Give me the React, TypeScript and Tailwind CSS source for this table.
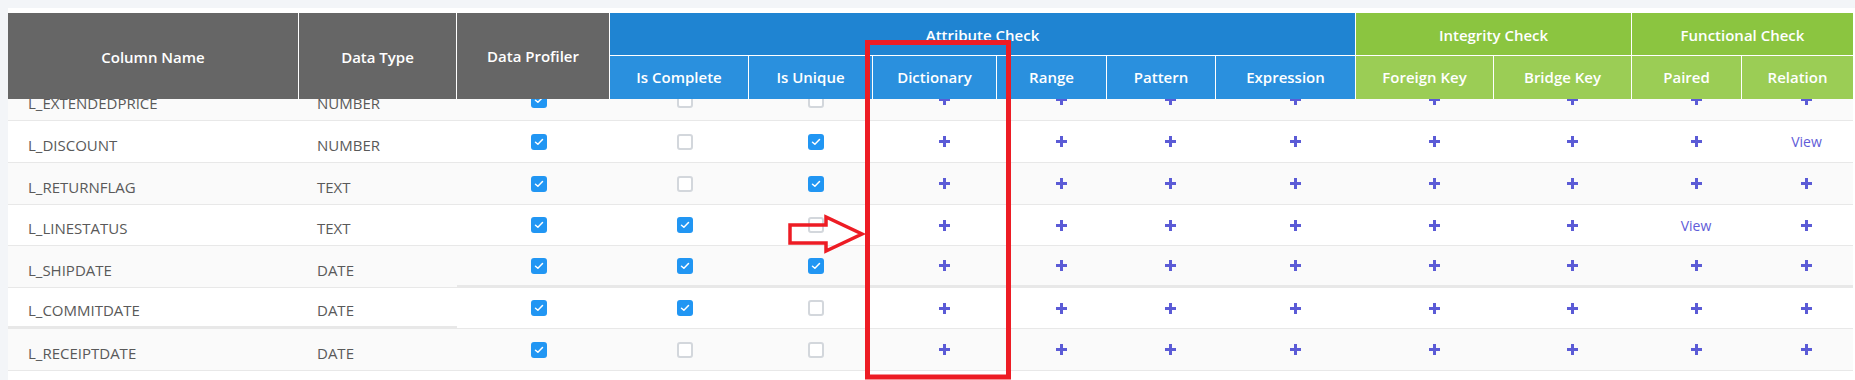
import React from 'react';

type Cell = 'plus' | 'view';

interface Row {
  name: string;
  type: string;
  profiler: boolean;
  complete: boolean;
  unique: boolean;
  checks: Cell[];
  height: string;
  leftBorder: string;
  rightBorder: string;
}

const COLS = 'grid grid-cols-[291px_158px_153px_139px_124px_124px_110px_109px_140px_138px_138px_110px_111px]';

const plusAll = (): Cell[] => ['plus', 'plus', 'plus', 'plus', 'plus', 'plus', 'plus', 'plus'];

const rows: Row[] = [
  { name: 'L_EXTENDEDPRICE', type: 'NUMBER', profiler: true, complete: false, unique: false, checks: plusAll(), height: 'h-[42px]', leftBorder: 'border-b', rightBorder: 'border-b' },
  { name: 'L_DISCOUNT', type: 'NUMBER', profiler: true, complete: false, unique: true, checks: ['plus', 'plus', 'plus', 'plus', 'plus', 'plus', 'plus', 'view'], height: 'h-[42px]', leftBorder: 'border-b', rightBorder: 'border-b' },
  { name: 'L_RETURNFLAG', type: 'TEXT', profiler: true, complete: false, unique: true, checks: plusAll(), height: 'h-[42px]', leftBorder: 'border-b', rightBorder: 'border-b' },
  { name: 'L_LINESTATUS', type: 'TEXT', profiler: true, complete: true, unique: false, checks: ['plus', 'plus', 'plus', 'plus', 'plus', 'plus', 'view', 'plus'], height: 'h-[41px]', leftBorder: 'border-b', rightBorder: 'border-b' },
  { name: 'L_SHIPDATE', type: 'DATE', profiler: true, complete: true, unique: true, checks: plusAll(), height: 'h-[42px]', leftBorder: 'border-b', rightBorder: 'border-b-[3px]' },
  { name: 'L_COMMITDATE', type: 'DATE', profiler: true, complete: true, unique: false, checks: plusAll(), height: 'h-[41px]', leftBorder: 'border-b-[3px]', rightBorder: 'border-b' },
  { name: 'L_RECEIPTDATE', type: 'DATE', profiler: true, complete: false, unique: false, checks: plusAll(), height: 'h-[42px]', leftBorder: 'border-b', rightBorder: 'border-b' },
];

const Checkbox: React.FC<{ checked: boolean }> = ({ checked }) =>
  checked ? (
    <span className="w-4 h-4 rounded-[3px] bg-[#2196f3] flex items-center justify-center">
      <svg width="10" height="8" viewBox="0 0 10 8" fill="none">
        <path d="M1.5 4.2 L3.9 6.3 L8.5 1.6" stroke="white" strokeWidth="1.5" strokeLinecap="round" strokeLinejoin="round" />
      </svg>
    </span>
  ) : (
    <span className="w-4 h-4 rounded-[3px] bg-white border-2 border-[#d3d7dc]" />
  );

const Plus = () => (
  <svg width="11" height="11" viewBox="0 0 11 11" className="text-[#5b5bd6]">
    <rect x="4" y="0" width="3" height="11" fill="currentColor" />
    <rect x="0" y="4" width="11" height="3" fill="currentColor" />
  </svg>
);

const headGray = 'bg-[#666666] border-r border-white flex items-center justify-center';

const App: React.FC = () => {
  return (
    <div className="relative w-[1855px] h-[380px] bg-[#f3f5f8] pl-[8px] pt-[8px] overflow-hidden font-['Open_Sans',sans-serif]">
      <div className="bg-white h-full pt-[5px] pr-[2px]">
        {/* Header */}
        <div className={`${COLS} grid-rows-[42px_44px] relative z-10 text-white font-semibold text-[15px]`}>
          <div className={`${headGray} row-span-2 pt-[3px]`}>Column Name</div>
          <div className={`${headGray} row-span-2 pt-[3px]`}>Data Type</div>
          <div className={`${headGray} row-span-2`}>Data Profiler</div>
          <div className="col-span-6 bg-[#1f84d2] border-r border-white flex items-center justify-center pt-[2px]">Attribute Check</div>
          <div className="col-span-2 bg-[#8bc540] border-r border-white flex items-center justify-center pt-[2px]">Integrity Check</div>
          <div className="col-span-2 bg-[#8bc540] flex items-center justify-center pt-[2px]">Functional Check</div>
          {['Is Complete', 'Is Unique', 'Dictionary', 'Range', 'Pattern', 'Expression'].map(t => (
            <div key={t} className="bg-[#2a90de] border-t border-r border-white flex items-center justify-center">{t}</div>
          ))}
          {['Foreign Key', 'Bridge Key', 'Paired'].map(t => (
            <div key={t} className="bg-[#9bcd55] border-t border-r border-white flex items-center justify-center">{t}</div>
          ))}
          <div className="bg-[#9bcd55] border-t border-white flex items-center justify-center">Relation</div>
        </div>

        {/* Body, scrolled so the first row sits under the header */}
        <div className="overflow-hidden">
          <div className="-mt-[20px] text-[15px] text-[#595959]">
            {rows.map((r, i) => {
              const bg = i % 2 === 0 ? 'bg-[#fafafa]' : 'bg-white';
              return (
                <div key={r.name} className={`${COLS} ${r.height} ${bg}`}>
                  <div className={`${r.leftBorder} border-[#e8e8e8] flex items-center pl-[20px] pt-[7px]`}>{r.name}</div>
                  <div className={`${r.leftBorder} border-[#e8e8e8] flex items-center pl-[18px] pt-[7px]`}>{r.type}</div>
                  {[r.profiler, r.complete, r.unique].map((c, j) => (
                    <div key={j} className={`${r.rightBorder} border-[#e8e8e8] flex items-center justify-center pl-[10px]`}>
                      <Checkbox checked={c} />
                    </div>
                  ))}
                  {r.checks.map((c, j) => (
                    <div key={j} className={`${r.rightBorder} border-[#e8e8e8] flex items-center justify-center pl-[18px]`}>
                      {c === 'plus' ? <Plus /> : <span className="text-[14px] text-[#5f5cd8]">View</span>}
                    </div>
                  ))}
                </div>
              );
            })}
          </div>
        </div>
      </div>

      {/* Red annotation drawn over the screenshot */}
      <svg className="absolute inset-0 z-20 pointer-events-none" width="1855" height="380" viewBox="0 0 1855 380">
        <rect x="867.5" y="42.5" width="141" height="334.5" fill="none" stroke="#ed1c24" strokeWidth="5" />
        <polygon points="790,225 826,225 826,217 862,234 826,251 826,243 790,243" fill="none" stroke="#ed1c24" strokeWidth="3.5" strokeLinejoin="miter" />
      </svg>
    </div>
  );
};

export default App;
